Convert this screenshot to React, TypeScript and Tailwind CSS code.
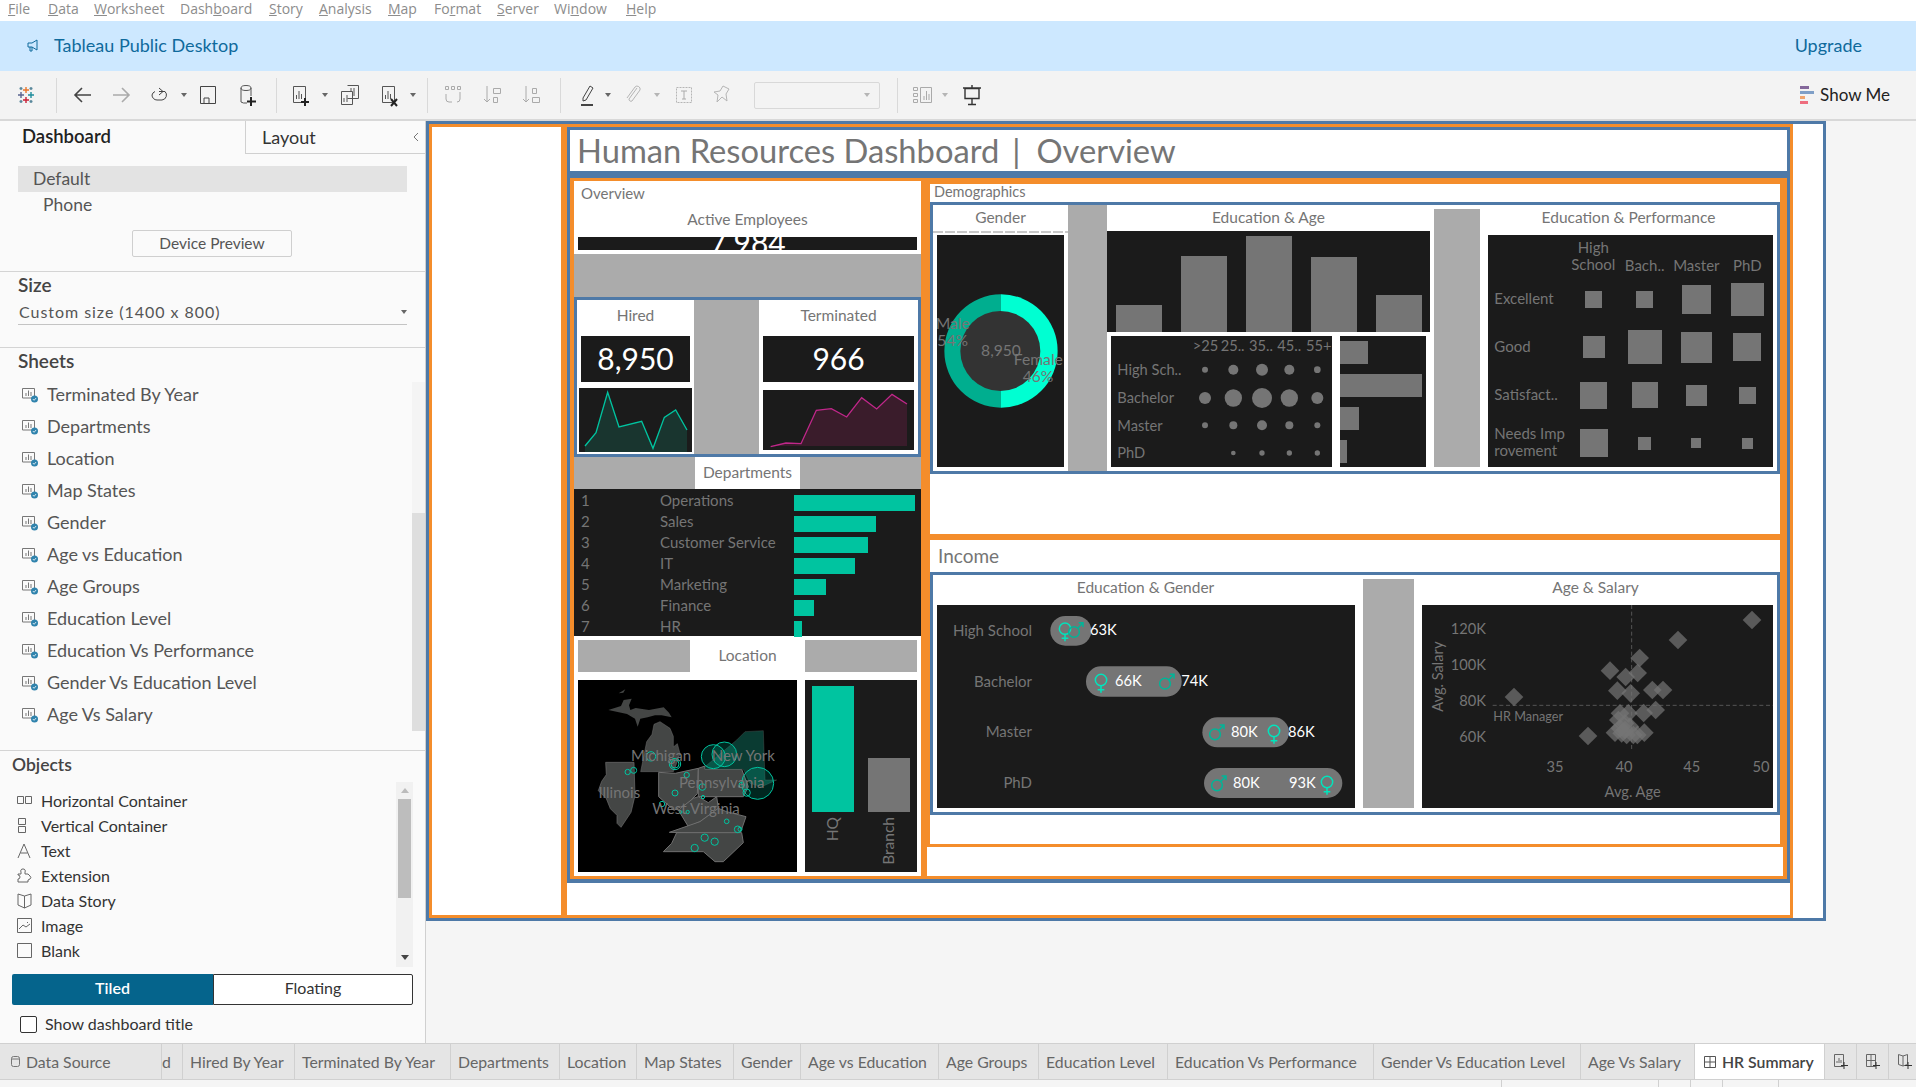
import type { ReactNode } from "react";

const sheets = ["Terminated By Year", "Departments", "Location", "Map States", "Gender", "Age vs Education", "Age Groups", "Education Level", "Education Vs Performance", "Gender Vs Education Level", "Age Vs Salary"];

const departments = [
  ["1", "Operations", 121],
  ["2", "Sales", 82],
  ["3", "Customer Service", 74],
  ["4", "IT", 61],
  ["5", "Marketing", 32],
  ["6", "Finance", 20],
  ["7", "HR", 8],
] as const;

const tabs = [
  ["d", 21],
  ["Hired By Year", 112],
  ["Terminated By Year", 156],
  ["Departments", 109],
  ["Location", 77],
  ["Map States", 97],
  ["Gender", 67],
  ["Age vs Education", 138],
  ["Age Groups", 100],
  ["Education Level", 129],
  ["Education Vs Performance", 206],
  ["Gender Vs Education Level", 207],
  ["Age Vs Salary", 114],
] as const;

const menu: [string, string, string, number][] = [
  ["", "F", "ile", 8],
  ["", "D", "ata", 48],
  ["", "W", "orksheet", 94],
  ["Dash", "b", "oard", 180],
  ["", "S", "tory", 269],
  ["", "A", "nalysis", 319],
  ["", "M", "ap", 388],
  ["Fo", "r", "mat", 434],
  ["", "S", "erver", 497],
  ["Wi", "n", "dow", 554],
  ["", "H", "elp", 626],
];

function Caret({ light, x = 0 }: { light?: boolean; x?: number }) {
  return (
    <svg width="6" height="4" viewBox="0 0 6 4" style={{ marginLeft: x }} className="shrink-0">
      <path d="M0 0h6L3 4z" fill={light ? "#b5b5b5" : "#666"} />
    </svg>
  );
}

function Tool({ x, children }: { x: number; children: ReactNode }) {
  return (
    <svg width="24" height="24" viewBox="0 0 24 24" fill="none" stroke="#555" strokeWidth="1" style={{ marginLeft: x }} className="shrink-0">
      {children}
    </svg>
  );
}

function Sep({ x }: { x: number }) {
  return <span className="h-[35px] w-px shrink-0 bg-[#d9d9d9]" style={{ marginLeft: x }} />;
}

function SheetIcon() {
  return (
    <svg width="17" height="15" viewBox="0 0 17 15" fill="none" className="shrink-0">
      <path d="M.5.5h12v9.5H.5z" stroke="#777" />
      <path d="M4 8V5M6.5 8V2.500M9 8V4" stroke="#777" />
      <circle cx="12.500" cy="11" r="3.500" fill="#2f83ad" />
      <path d="M10.800 11l1.300 1.300 2-2.300" stroke="#fff" strokeWidth=".8" />
    </svg>
  );
}

function BarSheet({ badge }: { badge: ReactNode }) {
  return (
    <>
      <path d="M5.500 3.500h12v16h-12z" />
      <path d="M8.500 16v-4M11 16V8M13.500 16v-5" />
      {badge}
    </>
  );
}

function Toolbar() {
  const plus = <path d="M17 15v8M13 19h8" stroke="#222" strokeWidth="2" />;
  return (
    <div className="flex h-[50px] items-center border-b-2 border-[#d8d8d8] bg-[#f3f3f3]">
      <svg width="18" height="18" viewBox="0 0 18 18" className="ml-[17px] shrink-0" strokeWidth="1.400">
        <path d="M9 1v6M6 4h6" stroke="#e8762c" />
        <path d="M9 11v6M6 14h6" stroke="#c72037" />
        <path d="M4 6v6M1 9h6" stroke="#5b6591" />
        <path d="M14 6v6M11 9h6" stroke="#1f8d9c" />
        <path d="M4 1v3M2.500 2.500h3M14 1v3M12.500 2.500h3M4 14v3M2.500 15.500h3M14 14v3M12.500 15.500h3" stroke="#59879b" />
      </svg>
      <Sep x={21} />
      <Tool x={14}>
        <path d="M20 12H5M11 5l-7 7 7 7" stroke="#444" strokeWidth="1.600" />
      </Tool>
      <Tool x={14}>
        <path d="M4 12h15M13 5l7 7-7 7" stroke="#aaa" strokeWidth="1.600" />
      </Tool>
      <Tool x={14}>
        <path d="M8 8.500A5 5 0 0 0 5 12a5 5 0 0 0 5 5h5a5 5 0 0 0 3-8.500H12M12 5l4 3.500-4 3.500" stroke="#444" />
      </Tool>
      <Caret x={10} />
      <Tool x={9}>
        <path d="M4.500 3.500h15v17h-15zM8 20v-5h5v5" stroke="#444" />
      </Tool>
      <Tool x={15}>
        <ellipse cx="11" cy="5" rx="5" ry="2.500" />
        <path d="M6 5v14a5 2 0 0 0 6 1M16 5v8" />
        <path d="M16 14v9M12 18.500h9" stroke="#222" strokeWidth="2" />
      </Tool>
      <Sep x={17} />
      <Tool x={11}><BarSheet badge={plus} /></Tool>
      <Caret x={10} />
      <Tool x={10}>
        <path d="M9.500 2.500h11v13h-11M3.500 8.500h11v13h-11z" />
        <path d="M13 8V5M16 13V5M6 19v-4M9 19v-7" />
      </Tool>
      <Tool x={15}>
        <BarSheet badge={<path d="M14 16l6 7M20 16l-6 7" stroke="#222" strokeWidth="2" />} />
      </Tool>
      <Caret x={9} />
      <Sep x={11} />
      <Tool x={13}>
        <g stroke="#aaa">
          <path d="M4.500 3.500h3v3h-3zM10.500 3.500h3v3h-3zM16.500 3.500h3v3h-3zM5 11v5a3 3 0 0 0 3 3h3M19 9v7a3 3 0 0 1-3 3" />
        </g>
      </Tool>
      <Tool x={16}>
        <g stroke="#aaa">
          <path d="M6 3v16M3 16l3 3 3-3M12.500 5.500h7v5h-7zM12.500 14.500h4v5h-4z" />
        </g>
      </Tool>
      <Tool x={15}>
        <g stroke="#aaa">
          <path d="M6 3v16M3 16l3 3 3-3M12.500 5.500h4v5h-4zM12.500 14.500h7v5h-7z" />
        </g>
      </Tool>
      <Sep x={16} />
      <Tool x={14}>
        <path d="M8 15L15 3l3 2-7 12-3 1z" stroke="#444" />
        <path d="M6 22h12" stroke="#444" strokeWidth="2" />
      </Tool>
      <Caret x={6} />
      <Tool x={10}>
        <path d="M16 5l-8 11a2 2 0 0 0 3 2l8-11a3 3 0 0 0-5-3L6 15" stroke="#b5b5b5" />
      </Tool>
      <Caret light x={9} />
      <Tool x={12}>
        <path d="M4.500 4.500h15v15h-15z" stroke="#b5b5b5" strokeDasharray="2 1" />
        <path d="M9 8h6M12 8v8M10 16h4" stroke="#aaa" />
      </Tool>
      <Tool x={14}>
        <path d="M13 3l6 3-3 5 1 7-5-4-5 5 1-7-4-3 6-1z" stroke="#b5b5b5" />
      </Tool>
      <div className="ml-[20px] flex h-[27px] w-[126px] shrink-0 items-center justify-end rounded-[2px] border border-[#d8d8d8] pr-[9px]">
        <Caret light />
      </div>
      <Sep x={17} />
      <Tool x={13}>
        <g stroke="#aaa">
          <path d="M2.500 4.500h4v3h-4zM2.500 10.500h4v3h-4zM2.500 16.500h4v3h-4zM9.500 4.500h11v15h-11zM13 17v-4M15.500 17V8M18 17v-6" />
        </g>
      </Tool>
      <Caret light x={7} />
      <Tool x={12}>
        <path d="M5 5.500h14v10H5zM3 5h18M12 2v3M12 15.500V21M8 21.500h8" stroke="#333" strokeWidth="1.400" />
      </Tool>
      <div className="ml-auto mr-[26px] flex items-center gap-[6px] text-[17px] text-[#222]">
        <span className="flex flex-col gap-[2px]">
          <i className="block h-[3px] w-[9px] bg-[#84689b]" />
          <i className="block h-[3px] w-[14px] bg-[#7f9fc7]" />
          <i className="block h-[3px] w-[5px] bg-[#f0a46e]" />
          <i className="block h-[3px] w-[8px] bg-[#ee6d7e]" />
        </span>
        Show Me
      </div>
    </div>
  );
}

const objects: [string, ReactNode][] = [
  ["Horizontal Container", <path d="M.5 3.500h6v7h-6zM8.500 3.500h6v7h-6z" />],
  ["Vertical Container", <path d="M1.500.5h7v6h-7zM1.500 8.500h7v6h-7z" />],
  ["Text", <path d="M1 15L7 1l6 14M3.500 10h7" />],
  ["Extension", <path d="M4 6V4a2 2 0 0 1 2-3 2 2 0 0 1 2 3v2h3l2 2a2 2 0 0 1 0 3l-2 1v2H1v-3a2 2 0 0 0 0-4V6z" />],
  ["Data Story", <path d="M7.500 3L1 1v11l6.500 3 6.500-3V1zM7.500 3v12" />],
  ["Image", <path d="M.5.500h14v14H.5zM2 11l4-4 3 2 4-3M10 4.500h1" />],
  ["Blank", <path d="M.5.500h14v14H.5z" />],
];

function Sidebar() {
  return (
    <aside className="flex h-full w-[426px] shrink-0 flex-col border-r border-[#d0d0d0] bg-[#fafafa] text-[#555]">
      <div className="flex h-[33px] shrink-0 items-center">
        <div className="w-[245px] pb-[2px] pl-[22px] text-[18.500px] font-semibold text-[#222]">Dashboard</div>
        <div className="flex h-full flex-1 items-center justify-between border-b border-l border-[#d0d0d0] pl-[16px] pr-[6px] text-[18px] text-[#333]">
          Layout
          <svg width="6" height="10" viewBox="0 0 6 10" fill="none" stroke="#777"><path d="M5 1L1 5l4 4" /></svg>
        </div>
      </div>
      <div className="mx-[18px] mt-[12px] flex h-[26px] shrink-0 items-center bg-[#e3e3e3] pl-[15px] text-[17.500px]">Default</div>
      <div className="ml-[43px] flex h-[26px] shrink-0 items-center text-[17.500px]">Phone</div>
      <button className="ml-[132px] mt-[12px] h-[27px] w-[160px] shrink-0 rounded-[2px] border border-[#cfcfcf] text-[15.500px] text-[#555]">Device Preview</button>
      <div className="mt-[14px] border-t border-[#d4d4d4]" />
      <div className="flex h-[27px] shrink-0 items-center pl-[18px] text-[19px] font-semibold text-[#444]">Size</div>
      <div className="mx-[18px] flex h-[26px] shrink-0 items-center justify-between border-b border-[#c4c4c4] pl-px text-[16px] tracking-[0.06em]">
        Custom size (1400 x 800)
        <Caret />
      </div>
      <div className="mt-[22px] border-t border-[#d4d4d4]" />
      <div className="flex h-[31px] shrink-0 items-center pb-[4px] pl-[18px] text-[19px] font-semibold text-[#444]">Sheets</div>
      <div className="flex h-[352px] shrink-0">
        <div className="flex-1">
          {sheets.map((s) => (
            <div key={s} className="flex h-[32px] items-center gap-[8px] pl-[22px] text-[18px]">
              <SheetIcon />
              <span className="pb-[2px]">{s}</span>
            </div>
          ))}
        </div>
        <div className="mt-[3px] flex w-[13px] flex-col bg-[#f4f4f4]">
          <div className="mt-[131px] flex-1 bg-[#dedede]" />
        </div>
      </div>
      <div className="mt-[19px] border-t border-[#d4d4d4]" />
      <div className="flex h-[28px] shrink-0 items-center pl-[12px] text-[17.500px] font-semibold text-[#444]">Objects</div>
      <div className="mt-[3px] flex h-[185px] shrink-0">
        <div className="flex-1 pl-[17px] pt-[6px]">
          {objects.map(([name, icon]) => (
            <div key={name} className="flex h-[25px] items-center gap-[9px] text-[16px] text-[#333]">
              <svg width="15" height="16" viewBox="0 0 15 16" fill="none" stroke="#666" className="shrink-0">{icon}</svg>
              {name}
            </div>
          ))}
        </div>
        <div className="mr-[12px] flex w-[17px] flex-col items-center bg-[#f1f1f1] pt-[6px]">
          <svg width="8" height="5" viewBox="0 0 8 5"><path d="M0 5h8L4 0z" fill="#bbb" /></svg>
          <div className="mt-[6px] h-[99px] w-[13px] bg-[#bdbdbd]" />
          <svg width="8" height="5" viewBox="0 0 8 5" className="mt-[57px]"><path d="M0 0h8L4 5z" fill="#444" /></svg>
        </div>
      </div>
      <div className="ml-[12px] mt-[7px] flex h-[31px] w-[401px] shrink-0 text-[16px]">
        <div className="flex w-[201px] items-center justify-center rounded-l-[2px] bg-[#05648c] pb-[3px] font-semibold text-white">Tiled</div>
        <div className="flex flex-1 items-center justify-center rounded-r-[2px] border border-[#333] bg-white pb-[3px] text-[#333]">Floating</div>
      </div>
      <div className="ml-[20px] mt-[7px] flex items-center gap-[8px] text-[16px] text-[#333]">
        <span className="h-[17px] w-[17px] rounded-[2px] border border-[#333] bg-white" />
        Show dashboard title
      </div>
    </aside>
  );
}

function Spark({ box, line, area, stroke, fill }: { box: string; line: string; area: string; stroke: string; fill: string }) {
  return (
    <svg viewBox={box} className="block h-full w-full bg-[#1b1b1b]">
      <polygon points={area} fill={fill} />
      <polyline points={line} fill="none" stroke={stroke} strokeWidth="4" />
    </svg>
  );
}

function Kpi({ title, value, children, spark }: { title: string; value: string; children: ReactNode; spark: string }) {
  return (
    <div className="h-full bg-white">
      <div className="flex h-[36px] items-center justify-center pb-[4px] text-[15.500px] text-[#757575]">{title}</div>
      <div className="mx-[4px] flex h-[46px] items-center justify-center bg-[#1b1b1b] pb-[2px] text-[30px] text-white">{value}</div>
      <div className={spark}>{children}</div>
    </div>
  );
}

function MapChart() {
  const dots: [number, number, number][] = [[273, 349, 14], [345, 372, 17], [345, 372, 12], [203, 396, 8], [221, 391, 9], [380, 405, 8], [427, 441, 10], [345, 459, 9], [429, 471, 5], [306, 492, 8], [383, 516, 5], [362, 516, 4], [560, 458, 11], [545, 435, 8], [500, 544, 7], [533, 568, 10], [540, 568, 6], [434, 593, 11], [464, 605, 11], [404, 624, 11]];
  const big: [number, number, number][] = [[460, 350, 36], [493, 343, 37], [593, 430, 48]];
  return (
    <svg viewBox="54 120 657 576" className="h-[192px] w-[219px] bg-black">
      <g fill="#444645" stroke="#6f6f6f" strokeWidth="3" strokeLinejoin="round">
        <path d="M176 160l20-12-6 10z" stroke="none" />
        <path d="M145 210l38-12 8-18 24-4-8 20 4 14 16-6 40 6 44-8 16 16 8 14-30-6-20 0-22 6-22 4-8 24-8-24-24-14z" stroke="none" />
        <path d="M300 245l30 20 10 24 0 32 12-10 8 30-14 40-6 14H242l10-50 8-40 16-22 6-30z" strokeWidth="1.500" />
        <path d="M137 367h85l3 100-12 50-30 45-12-12 0-24-20-20-12-30-24-24 10-28 14-20z" strokeWidth="2" />
        <path d="M296 397l50 3 69-15-3 76-30 30-40 20-46-41z" />
        <path d="M415 385l20-7v10h110l20 52-15 30H415z" />
        <path d="M415 470l30 18 25-18 5 35-55 40-35 15-30-50 45-35z" />
        <path d="M328 577l92-32 55-40 25 10 58 15-18 52z" />
        <path d="M350 578h195l5 30-60 57h-25l-35-30H310l25-25z" />
      </g>
      <path d="M435 380l95-80 25-25 55-3 5 148h35l-45 20-35-10-20-42H435z" fill="#0a3b32" stroke="#666" strokeWidth="1" />
      {big.map(([cx, cy, r]) => (
        <circle key={cx} cx={cx} cy={cy} r={r} fill="#00c4a0" fillOpacity=".2" stroke="#00c4a0" strokeWidth="3" />
      ))}
      {dots.map(([cx, cy, r]) => (
        <circle key={`${cx}-${r}`} cx={cx} cy={cy} r={r} fill="none" stroke="#00c4a0" strokeWidth="3" />
      ))}
      <g fill="#757575" fontSize="45" textAnchor="middle">
        <text x="303" y="362">Michigan</text>
        <text x="550" y="363">New York</text>
        <text x="485" y="445">Pennsylvania</text>
        <text x="178" y="474">Illinois</text>
        <text x="408" y="522">West Virginia</text>
      </g>
    </svg>
  );
}

function GenderChart() {
  return (
    <svg viewBox="51 195 381 696" className="mx-[4px] mt-[2px] h-[232px] w-[127px] bg-[#1b1b1b]">
      <path d="M243 373a170 170 0 0 0 0 340z" fill="#00ae8f" />
      <path d="M243 373a170 170 0 0 1 0 340z" fill="#00ffd2" />
      <circle cx="241" cy="543" r="120" fill="#333" />
      <g fill="#757575" fontSize="47" textAnchor="middle">
        <text x="98" y="477">Male</text>
        <text x="98" y="528">54%</text>
        <text x="243" y="558">8,950</text>
        <text x="355" y="585">Female</text>
        <text x="354" y="636">46%</text>
      </g>
    </svg>
  );
}

function DotMatrix() {
  const xs = [855, 940, 1026, 1108, 1192];
  const rows: [string, number, number[]][] = [
    ["High Sch..", 599, [9, 15, 18, 15, 10]],
    ["Bachelor", 684, [18, 26, 30, 26, 18]],
    ["Master", 766, [9, 12, 15, 12, 9]],
    ["PhD", 849, [0, 7, 8, 8, 8]],
  ];
  return (
    <svg viewBox="573 498 663 393" className="h-[131px] w-[221px] bg-[#1b1b1b]">
      <g fill="#757575" fontSize="44">
        {[[818, ">25"], [902, "25.."], [987, "35.."], [1072, "45.."], [1158, "55+"]].map(([x, t]) => (
          <text key={t} x={x} y="542">{t}</text>
        ))}
        {rows.map(([name, y, rs]) => (
          <g key={name}>
            <text x="592" y={y + 16}>{name}</text>
            {rs.map((r, i) => r > 0 && <circle key={i} cx={xs[i]} cy={y} r={r} />)}
          </g>
        ))}
      </g>
    </svg>
  );
}

function PerfChart() {
  const squares = [
    [555, 363, 606, 414], [708, 363, 759, 414], [846, 345, 933, 432], [993, 339, 1092, 438],
    [549, 498, 615, 564], [684, 480, 786, 582], [843, 486, 936, 579], [999, 489, 1083, 573],
    [540, 636, 621, 717], [696, 636, 774, 714], [858, 645, 921, 708], [1017, 651, 1068, 702],
    [540, 777, 624, 861], [714, 801, 753, 840], [873, 804, 903, 834], [1026, 804, 1059, 837],
  ];
  const labels: [string, number, number, "start" | "middle"][] = [
    ["High", 580, 249, "middle"], ["School", 580, 300, "middle"], ["Bach..", 734, 302, "middle"],
    ["Master", 889, 302, "middle"], ["PhD", 1042, 302, "middle"],
    ["Excellent", 283, 402, "start"], ["Good", 283, 545, "start"], ["Satisfact..", 283, 690, "start"],
    ["Needs Imp", 283, 807, "start"], ["rovement", 283, 858, "start"],
  ];
  return (
    <svg viewBox="264 195 855 696" className="ml-[8px] h-[232px] w-[285px] bg-[#1b1b1b]">
      <g fill="#757575">
        {squares.map(([a, b, c, d]) => <rect key={`${a}-${b}`} x={a} y={b} width={c - a} height={d - b} />)}
      </g>
      <g fill="#757575" fontSize="45">
        {labels.map(([t, x, y, anchor]) => <text key={t} x={x} y={y} textAnchor={anchor}>{t}</text>)}
      </g>
    </svg>
  );
}

function Female({ x, y }: { x: number; y: number }) {
  return (
    <g transform={`translate(${x} ${y})`} fill="none" stroke="#00e5bd" strokeWidth="4.500">
      <circle cx="0" cy="-8" r="17" />
      <path d="M0 9v21M-10 21h20" />
    </g>
  );
}

function Male({ x, y }: { x: number; y: number }) {
  return (
    <g transform={`translate(${x} ${y})`} fill="none" stroke="#00b598" strokeWidth="4.500">
      <circle cx="-5" cy="6" r="16" />
      <path d="M7 -6L22 -22M9 -22h13v13" />
    </g>
  );
}

function GenderPay() {
  const labels: [string, number][] = [["High School", 318], ["Bachelor", 470], ["Master", 621], ["PhD", 774]];
  const pills = [[391, 258, 123, 89], [498, 409, 287, 91], [847, 562, 260, 90], [852, 714, 415, 90]];
  const values: [string, number, number][] = [["63K", 510, 314], ["66K", 585, 467], ["74K", 784, 467], ["80K", 933, 620], ["86K", 1104, 620], ["80K", 939, 773], ["93K", 1107, 773]];
  return (
    <svg viewBox="51 225 1254 609" className="ml-[4px] h-[203px] w-[418px] bg-[#1b1b1b]">
      <g fill="#757575" fontSize="45" textAnchor="end">
        {labels.map(([t, y]) => <text key={t} x="336" y={y}>{t}</text>)}
      </g>
      {pills.map(([x, y, w, h]) => <rect key={x} x={x} y={y} width={w} height={h} rx="45" fill="#757575" />)}
      <Female x={435} y={304} />
      <Male x={467} y={300} />
      <Female x={543} y={458} />
      <Male x={740} y={455} />
      <Male x={890} y={607} />
      <Female x={1062} y={611} />
      <Male x={896} y={760} />
      <Female x={1221} y={764} />
      <g fill="#fff" fontSize="44">
        {values.map(([t, x, y]) => <text key={x} x={x} y={y}>{t}</text>)}
      </g>
    </svg>
  );
}

function Scatter() {
  const pts = [[1056, 180], [834, 240], [719, 294], [630, 332], [677, 351], [713, 339], [652, 392], [692, 400], [757, 390], [789, 390], [342, 411], [564, 528], [767, 450], [731, 459], [660, 460], [685, 460], [655, 480], [675, 490], [690, 500], [645, 518], [665, 520], [680, 525], [700, 525], [733, 518], [712, 525], [660, 505], [675, 510]];
  return (
    <svg viewBox="66 135 1053 609" className="ml-[8px] h-[203px] w-[351px] bg-[#1b1b1b]">
      <path d="M695 135v435M278 436h841" stroke="#555" strokeWidth="3" strokeDasharray="12 8" />
      {pts.map(([x, y]) => (
        <path key={`${x}-${y}`} d={`M${x} ${y - 28}l28 28-28 28-28-28z`} fill="#757575" fillOpacity=".7" />
      ))}
      <g fill="#757575" fontSize="44">
        <g textAnchor="end">
          <text x="258" y="222">120K</text>
          <text x="258" y="330">100K</text>
          <text x="258" y="438">80K</text>
          <text x="258" y="545">60K</text>
        </g>
        <g textAnchor="middle">
          <text x="465" y="635">35</text>
          <text x="672" y="635">40</text>
          <text x="875" y="635">45</text>
          <text x="1083" y="635">50</text>
          <text x="698" y="710">Avg. Age</text>
          <text transform="translate(130 350) rotate(-90)">Avg. Salary</text>
        </g>
        <text x="280" y="482" fontSize="38">HR Manager</text>
      </g>
    </svg>
  );
}

function Overview() {
  return (
    <div className="ml-[4px] mt-[3px] flex h-[695px] w-[347px] shrink-0 flex-col bg-white text-[#757575]">
      <div className="h-[73px] shrink-0 bg-white">
        <div className="flex h-[26px] items-center pb-[2px] pl-[7px] text-[15px]">Overview</div>
        <div className="flex h-[30px] items-center justify-center pb-[5px] text-[15.500px]">Active Employees</div>
        <div className="mx-[4px] flex h-[13px] justify-center overflow-hidden bg-[#1b1b1b] text-[30px] leading-[30px] text-white">
          <span className="-mt-[10px]">7,984</span>
        </div>
      </div>
      <div className="h-[43px] shrink-0 bg-[#ababab]" />
      <div className="flex h-[160px] shrink-0 border-[3px] border-[#4e79a7] bg-[#ababab]">
        <div className="w-[117px]">
          <Kpi title="Hired" value="8,950" spark="ml-[2px] mt-[6px] h-[64px] w-[113px]">
            <Spark box="57 804 339 192" stroke="#00c4a0" fill="#19352f"
              line="75,978 108,938 143,817 177,921 245,904 279,985 313,892 347,870 381,930"
              area="75,996 75,978 108,938 143,817 177,921 245,904 279,985 313,892 347,870 381,930 381,996" />
          </Kpi>
        </div>
        <div className="ml-[65px] w-[159px]">
          <Kpi title="Terminated" value="966" spark="ml-[4px] mt-[8px] h-[60px] w-[151px]">
            <Spark box="609 810 453 180" stroke="#c0278a" fill="#3a1c2b"
              line="632,980 678,969 723,971 769,871 814,866 860,891 905,833 950,867 996,823 1041,852"
              area="632,978 678,969 723,971 769,871 814,866 860,891 905,833 950,867 996,823 1041,852 1041,978" />
          </Kpi>
        </div>
      </div>
      <div className="flex h-[32px] shrink-0 bg-[#ababab]">
        <div className="ml-[121px] flex w-[105px] items-center justify-center bg-white pb-[1px] text-[15.500px]">Departments</div>
      </div>
      <div className="h-[147px] shrink-0 bg-[#1b1b1b] pt-[3px] text-[15px]">
        {departments.map(([n, name, w]) => (
          <div key={n} className="flex h-[21px] items-center leading-[18px]">
            <span className="w-[86px] pb-[5px] pl-[7px]">{n}</span>
            <span className="w-[134px] pb-[5px]">{name}</span>
            <span className="h-[16px] bg-[#00c4a0]" style={{ width: w }} />
          </div>
        ))}
      </div>
      <div className="flex-1 px-[4px] pt-[4px]">
        <div className="flex h-[32px]">
          <div className="w-[112px] bg-[#ababab]" />
          <div className="flex w-[115px] items-center justify-center pb-[1px] text-[15.500px]">Location</div>
          <div className="w-[112px] bg-[#ababab]" />
        </div>
        <div className="mt-[8px] flex gap-[8px]">
          <MapChart />
          <div className="flex h-[192px] w-[112px] gap-[14px] bg-[#1b1b1b] pl-[7px] pt-[6px] text-[15.500px]">
            <div className="flex w-[42px] flex-col items-center">
              <div className="h-[126px] w-[42px] shrink-0 bg-[#00c4a0]" />
              <div className="rotate-180 pb-[5px] [writing-mode:vertical-rl]">HQ</div>
            </div>
            <div className="flex w-[42px] flex-col items-center">
              <div className="mt-[72px] h-[54px] w-[42px] shrink-0 bg-[#757575]" />
              <div className="rotate-180 pb-[5px] [writing-mode:vertical-rl]">Branch</div>
            </div>
          </div>
        </div>
      </div>
    </div>
  );
}

function Demographics() {
  const bars = [[1116, 305], [1181, 256], [1246, 236], [1310, 257], [1375, 295]];
  return (
    <div className="h-[350px] bg-white text-[#757575]">
      <div className="flex h-[18px] items-center pb-[2px] pl-[4px] text-[14.500px]">Demographics</div>
      <div className="flex h-[272px] border-[3px] border-[#4e79a7]">
        <div className="w-[135px]">
          <div className="flex h-[26px] items-center justify-center text-[15.500px]">Gender</div>
          <div className="h-[2px] bg-[repeating-linear-gradient(90deg,#c8c8c8_0_10px,#fff_10px_12px)]" />
          <GenderChart />
        </div>
        <div className="w-[39px] bg-[#ababab]" />
        <div className="w-[327px]">
          <div className="flex h-[26px] w-[323px] items-center justify-center text-[15.500px]">Education &amp; Age</div>
          <div className="flex h-[101px] w-[323px] items-end bg-[#1b1b1b] pl-[9px]">
            {bars.map(([x, top]) => (
              <div key={x} className="mr-[19px] w-[46px] shrink-0 bg-[#757575]" style={{ height: 332 - top }} />
            ))}
          </div>
          <div className="ml-[4px] mt-[4px] flex gap-[8px]">
            <DotMatrix />
            <div className="flex h-[131px] w-[86px] flex-col gap-[10px] bg-[#1b1b1b] pt-[5px]">
              {[28, 82, 19, 7].map((w) => (
                <div key={w} className="h-[23px] bg-[#757575]" style={{ width: w }} />
              ))}
            </div>
          </div>
        </div>
        <div className="mt-[4px] h-[258px] w-[46px] bg-[#ababab]" />
        <div className="w-[297px]">
          <div className="flex h-[30px] items-center justify-center pb-[4px] text-[15.500px]">Education &amp; Performance</div>
          <PerfChart />
        </div>
      </div>
    </div>
  );
}

function Income() {
  return (
    <div className="mt-[6px] h-[304px] bg-white text-[#757575]">
      <div className="flex h-[32px] items-center pl-[8px] text-[19px]">Income</div>
      <div className="flex h-[243px] border-[3px] border-[#4e79a7]">
        <div className="w-[430px]">
          <div className="flex h-[30px] items-center justify-center pb-[4px] pr-[5px] text-[15.500px]">Education &amp; Gender</div>
          <GenderPay />
        </div>
        <div className="mt-[4px] h-[229px] w-[51px] bg-[#ababab]" />
        <div className="w-[363px]">
          <div className="flex h-[30px] items-center justify-center pb-[4px] text-[15.500px]">Age &amp; Salary</div>
          <Scatter />
        </div>
      </div>
    </div>
  );
}

function Canvas() {
  return (
    <div className="h-[800px] w-[1400px] border-[3px] border-[#4e79a7] bg-white font-['Lato',sans-serif]">
      <div className="flex h-[794px] w-[1364px] border-[3px] border-[#f48d2b]">
        <div className="w-[129px] bg-white" />
        <div className="w-[6px] bg-[#f48d2b]" />
        <div className="h-[756px] w-[1223px] bg-[#4e79a7] p-[3px]">
          <div className="flex h-[41px] items-center bg-white pl-[7px] text-[32.700px] text-[#757575]">
            Human Resources Dashboard<span className="ml-[13px] mr-[16px]">|</span>Overview
          </div>
          <div className="mt-[7px] flex h-[701px] bg-[#f48d2b]">
            <Overview />
            <div className="ml-[9px] mt-[6px] w-[850px]">
              <Demographics />
              <Income />
              <div className="-ml-[3px] mt-[3px] h-[29px] w-[856px] bg-white" />
            </div>
          </div>
        </div>
      </div>
    </div>
  );
}

export default function App() {
  return (
    <div className="flex h-[1087px] w-[1916px] flex-col overflow-hidden bg-[#f5f5f5] font-['Lato',sans-serif]">
      <div className="relative h-[21px] shrink-0 bg-white font-['Open_Sans',sans-serif] text-[14px] text-[#8c8c8c]">
        {menu.map(([a, u, b, x]) => (
          <span key={x} className="absolute top-0 leading-[18px]" style={{ left: x }}>
            {a}<span className="underline">{u}</span>{b}
          </span>
        ))}
      </div>
      <div className="flex h-[50px] shrink-0 items-center justify-between bg-[#cde8ff] pb-[2px] pl-[26px] pr-[54px] text-[18px] text-[#0f6a9c]">
        <div className="flex items-center gap-[13px]">
          <svg width="15" height="15" viewBox="0 0 15 15" fill="none" stroke="#0f6a9c">
            <path d="M2 5h4l5-3v10L6 9H2zM4 9v4h2V9" />
          </svg>
          Tableau Public Desktop
        </div>
        Upgrade
      </div>
      <Toolbar />
      <div className="flex h-[922px] shrink-0">
        <Sidebar />
        <Canvas />
      </div>
      <div className="flex h-[37px] shrink-0 overflow-hidden border-y border-[#d0d0d0] bg-[#e5e5e5] text-[15.800px] text-[#666]">
        <div className="flex w-[162px] shrink-0 items-center gap-[6px] border-r border-[#d0d0d0] pl-[11px]">
          <svg width="9" height="11" viewBox="0 0 9 11" fill="none" stroke="#777"><rect x=".5" y=".5" width="8" height="10" rx="2" /><path d="M.5 3h8" /></svg>
          Data Source
        </div>
        {tabs.map(([t, w]) => (
          <div key={t} className="flex shrink-0 items-center overflow-hidden whitespace-nowrap border-r border-[#d0d0d0] pl-[7px]" style={{ width: w }}>
            <span className={t === "d" ? "-ml-[7px]" : ""}>{t}</span>
          </div>
        ))}
        <div className="flex w-[129px] shrink-0 items-center gap-[6px] bg-white pl-[9px] font-semibold text-[#444]">
          <svg width="12" height="12" viewBox="0 0 12 12" fill="none" stroke="#555" className="shrink-0"><path d="M.5.5h11v11H.5zM6 .5v11M.5 6h11" /></svg>
          <span className="whitespace-nowrap">HR Summary</span>
        </div>
        <div className="flex w-[32px] shrink-0 items-center justify-center border-l border-[#d0d0d0]">
          <svg width="16" height="17" viewBox="0 0 16 17" fill="none" stroke="#666">
            <path d="M1.500 1.500h9v12h-9zM4 10V8M6 10V5M8 10V7" />
            <path d="M11 9v7M8 12.500h7" stroke="#333" />
          </svg>
        </div>
        <div className="flex w-[32px] shrink-0 items-center justify-center border-l border-[#d0d0d0]">
          <svg width="16" height="17" viewBox="0 0 16 17" fill="none" stroke="#666">
            <path d="M1.500 1.500h9v12h-9zM6 1.500v12M1.500 7.500h9" />
            <path d="M11 9v7M8 12.500h7" stroke="#333" />
          </svg>
        </div>
        <div className="flex w-[32px] shrink-0 items-center justify-center border-l border-[#d0d0d0]">
          <svg width="16" height="17" viewBox="0 0 16 17" fill="none" stroke="#666">
            <path d="M6 3L1.500 1.500v10L6 13l4.500-1.500v-10zM6 3v10" />
            <path d="M11 9v7M8 12.500h7" stroke="#333" />
          </svg>
        </div>
      </div>
      <div className="flex h-[7px] shrink-0 bg-[#f5f5f5]">
        <div className="ml-[1501px] w-[157px] border-l border-[#d0d0d0]" />
        <div className="w-[32px] border-l border-[#d0d0d0]" />
        <div className="w-[32px] border-l border-[#d0d0d0]" />
        <div className="w-[56px] border-l border-[#d0d0d0]" />
        <div className="border-l border-[#d0d0d0]" />
      </div>
    </div>
  );
}
